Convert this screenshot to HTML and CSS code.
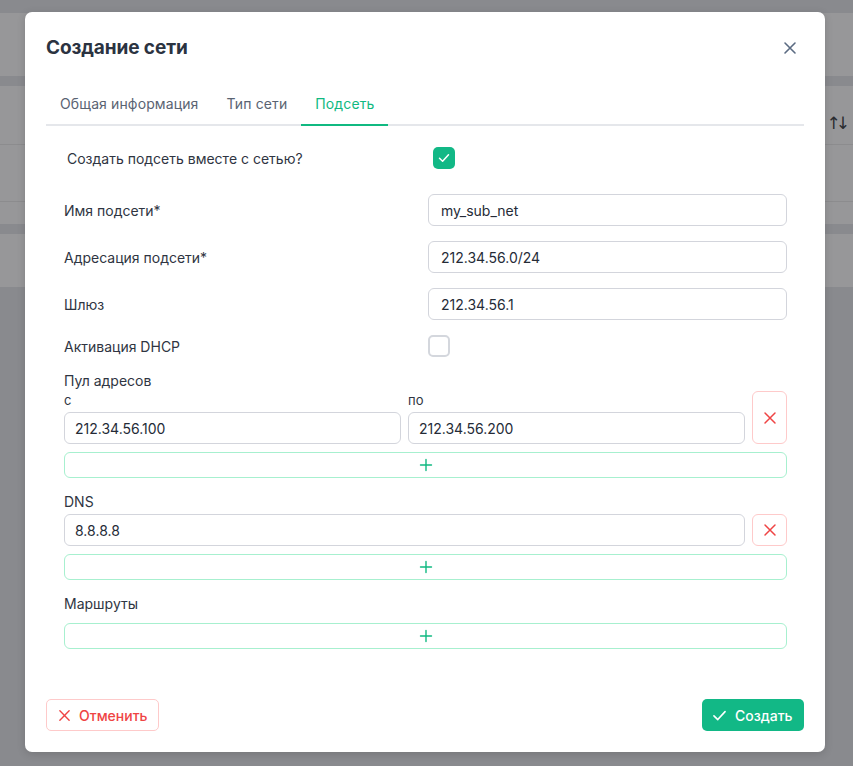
FILE: index.html
```html
<!DOCTYPE html>
<html lang="ru">
<head>
<meta charset="utf-8">
<title>Создание сети</title>
<link rel="stylesheet" href="styles.css">
</head>
<body>
<div class="page">
  <div class="bg-gap top"></div>
  <div class="bg-panel p1"></div>
  <div class="bg-gap"></div>
  <div class="bg-panel p2">
    <div class="bg-row r1"><span class="sort">↑↓</span></div>
    <div class="bg-row r2"></div>
    <div class="bg-row r3"></div>
  </div>
  <div class="bg-gap"></div>
  <div class="bg-panel p3"></div>
</div>

<div class="modal">
  <div class="modal-head">
    <h2 class="title">Создание сети</h2>
    <button class="close" aria-label="Закрыть">
      <svg width="14" height="14" viewBox="0 0 14 14"><path d="M2 2L12 12M12 2L2 12" stroke="#5b6b82" stroke-width="1.6" stroke-linecap="round"/></svg>
    </button>
  </div>

  <div class="tabs">
    <div class="tab">Общая информация</div>
    <div class="tab">Тип сети</div>
    <div class="tab active">Подсеть</div>
  </div>

  <div class="form">
    <div class="row first">
      <div class="label">Создать подсеть вместе с сетью?</div>
      <div class="field"><span class="check on"><svg width="14" height="14" viewBox="0 0 14 14"><path d="M2.5 7.2L5.6 10.2L11.5 3.8" fill="none" stroke="#fff" stroke-width="1.5" stroke-linecap="round" stroke-linejoin="round"/></svg></span></div>
    </div>
    <div class="row">
      <div class="label">Имя подсети*</div>
      <div class="field"><div class="input">my_sub_net</div></div>
    </div>
    <div class="row">
      <div class="label">Адресация подсети*</div>
      <div class="field"><div class="input">212.34.56.0/24</div></div>
    </div>
    <div class="row">
      <div class="label">Шлюз</div>
      <div class="field"><div class="input">212.34.56.1</div></div>
    </div>
    <div class="row dhcp">
      <div class="label">Активация DHCP</div>
      <div class="field"><span class="check off"></span></div>
    </div>

    <div class="section pool">
      <div class="sec-label">Пул адресов</div>
      <div class="pool-row">
        <div class="pool-col">
          <div class="small-label">с</div>
          <div class="input tight">212.34.56.100</div>
        </div>
        <div class="pool-col">
          <div class="small-label">по</div>
          <div class="input tight">212.34.56.200</div>
        </div>
        <button class="del tall" aria-label="Удалить">
          <svg width="14" height="14" viewBox="0 0 14 14"><path d="M2 2L12 12M12 2L2 12" stroke="#ef4444" stroke-width="1.5" stroke-linecap="round"/></svg>
        </button>
      </div>
      <button class="add" aria-label="Добавить">
        <svg width="14" height="14" viewBox="0 0 14 14"><path d="M7 1.5V12.5M1.5 7H12.5" stroke="#10b981" stroke-width="1.4" stroke-linecap="round"/></svg>
      </button>
    </div>

    <div class="section dns">
      <div class="sec-label">DNS</div>
      <div class="dns-row">
        <div class="input tight grow">8.8.8.8</div>
        <button class="del" aria-label="Удалить">
          <svg width="14" height="14" viewBox="0 0 14 14"><path d="M2 2L12 12M12 2L2 12" stroke="#ef4444" stroke-width="1.5" stroke-linecap="round"/></svg>
        </button>
      </div>
      <button class="add" aria-label="Добавить">
        <svg width="14" height="14" viewBox="0 0 14 14"><path d="M7 1.5V12.5M1.5 7H12.5" stroke="#10b981" stroke-width="1.4" stroke-linecap="round"/></svg>
      </button>
    </div>

    <div class="section routes">
      <div class="sec-label">Маршруты</div>
      <button class="add" aria-label="Добавить">
        <svg width="14" height="14" viewBox="0 0 14 14"><path d="M7 1.5V12.5M1.5 7H12.5" stroke="#10b981" stroke-width="1.4" stroke-linecap="round"/></svg>
      </button>
    </div>
  </div>

  <div class="footer">
    <button class="btn cancel">
      <svg width="13" height="13" viewBox="0 0 14 14"><path d="M2 2L12 12M12 2L2 12" stroke="#ef4444" stroke-width="1.5" stroke-linecap="round"/></svg>
      Отменить
    </button>
    <button class="btn create">
      <svg width="15" height="15" viewBox="0 0 14 14"><path d="M1.8 7.3L5.4 10.8L12.2 3.4" fill="none" stroke="#fff" stroke-width="1.5" stroke-linecap="round" stroke-linejoin="round"/></svg>
      Создать
    </button>
  </div>
</div>
</body>
</html>
```

FILE: styles.css
```css
* { box-sizing: border-box; }

html, body {
  margin: 0;
  padding: 0;
  height: 100%;
}

body {
  background: #898a8e;
  font-family: Inter, "Noto Sans", "Liberation Sans", sans-serif;
  overflow: hidden;
}

.page {
  display: flex;
  flex-direction: column;
}

.bg-gap { height: 10px; background: #898a8e; }
.bg-gap.top { height: 13px; }
.bg-panel { background: #979799; }
.p1 { height: 63px; }
.p2 { display: flex; flex-direction: column; }
.p3 { height: 53px; }

.bg-row { border-bottom: 1px solid #8c8c8e; }
.bg-row.r1 { height: 59px; display: flex; justify-content: flex-end; align-items: center; padding-right: 3px; }
.bg-row.r2 { height: 57px; }
.bg-row.r3 { height: 22px; border-bottom: none; }

.sort {
  font-family: "DejaVu Sans", sans-serif;
  font-size: 17px;
  color: #2a2c30;
  margin-top: 16px;
  letter-spacing: -5px;
  padding-right: 5px;
}

.modal {
  position: absolute;
  left: 25px;
  top: 12px;
  width: 800px;
  height: 740px;
  background: #fff;
  border-radius: 7px;
  box-shadow: 0 2px 8px rgba(0, 0, 0, 0.15);
  padding: 0 21px;
  display: flex;
  flex-direction: column;
}

.modal-head {
  height: 70px;
  display: flex;
  align-items: center;
  justify-content: space-between;
  padding-top: 1px;
}

.title {
  margin: 0;
  font-size: 19px;
  font-weight: 700;
  color: #2b3341;
  letter-spacing: -0.1px;
}

.close {
  border: none;
  background: none;
  padding: 0;
  margin-right: 7px;
  width: 14px;
  height: 14px;
  display: flex;
}

.tabs {
  display: flex;
  border-bottom: 2px solid #e5e7eb;
  height: 44px;
}

.tab {
  padding: 0 14px;
  font-size: 14px;
  letter-spacing: 0.12px;
  color: #5a6372;
  display: flex;
  align-items: center;
  margin-bottom: -2px;
  border-bottom: 2px solid transparent;
  padding-top: 1px;
}

.tab.active {
  color: #10b981;
  border-bottom-color: #10b981;
}

.form {
  padding: 0 17px 0 18px;
  display: flex;
  flex-direction: column;
}

.row {
  display: grid;
  grid-template-columns: 1fr 359px;
  column-gap: 5px;
  align-items: center;
  height: 32px;
  margin-top: 15px;
}

.row.first {
  margin-top: 16px;
  height: 32px;
}

.row.first .label { padding-left: 3px; }
.row.first .field { padding-left: 5px; }
.row:nth-child(2) { margin-top: 20px; }

.row.dhcp { height: 22px; margin-top: 15px; }

.label {
  font-size: 14px;
  color: #2f3542;
}

.field { display: flex; align-items: center; }

.input {
  height: 32px;
  width: 100%;
  border: 1px solid #d3d5dc;
  border-radius: 6px;
  padding: 0 12px;
  display: flex;
  align-items: center;
  font-size: 14px;
  color: #252b37;
}

.input.tight { padding: 0 10px; }

.check {
  width: 22px;
  height: 22px;
  border-radius: 5px;
  display: flex;
  align-items: center;
  justify-content: center;
}

.check.on { background: #12b886; }
.check.off { border: 2px solid #d4d7dd; }

.section {
  display: flex;
  flex-direction: column;
}

.sec-label {
  font-size: 14px;
  color: #2f3542;
  height: 20px;
  line-height: 20px;
}

.section.pool { margin-top: 14px; }
.section.dns { margin-top: 14px; }
.section.routes { margin-top: 14px; }

.pool-row {
  display: flex;
  gap: 7px;
  align-items: stretch;
}

.pool-col {
  flex: 1;
  display: flex;
  flex-direction: column;
}

.small-label {
  font-size: 13px;
  color: #2f3542;
  height: 21px;
  line-height: 18px;
}

.del {
  width: 35px;
  flex: none;
  border: 1px solid #fecaca;
  background: #fff;
  border-radius: 6px;
  display: flex;
  align-items: center;
  justify-content: center;
  padding: 0;
}

.del.tall { margin-top: 0; }

.dns-row {
  display: flex;
  gap: 7px;
  margin-top: 2px;
  height: 32px;
}

.input.grow { flex: 1; width: auto; }

.add {
  margin-top: 8px;
  height: 26px;
  width: 100%;
  border: 1px solid #a7f0cf;
  background: #fff;
  border-radius: 6px;
  display: flex;
  align-items: center;
  justify-content: center;
  padding: 0;
}

.routes .add { margin-top: 9px; }

.footer {
  margin-top: auto;
  margin-bottom: 21px;
  display: flex;
  justify-content: space-between;
}

.btn {
  height: 32px;
  border-radius: 5px;
  font-family: Inter, "Noto Sans", "Liberation Sans", sans-serif;
  font-size: 14px;
  font-weight: 500;
  display: flex;
  align-items: center;
  gap: 8px;
  cursor: pointer;
}

.cancel {
  width: 113px;
  border: 1px solid #fecaca;
  background: #fff;
  color: #ef4444;
  padding: 0 0 0 11px;
}

.create {
  width: 102px;
  border: none;
  background: #12b886;
  color: #fff;
  padding: 0 0 0 10px;
}
```
